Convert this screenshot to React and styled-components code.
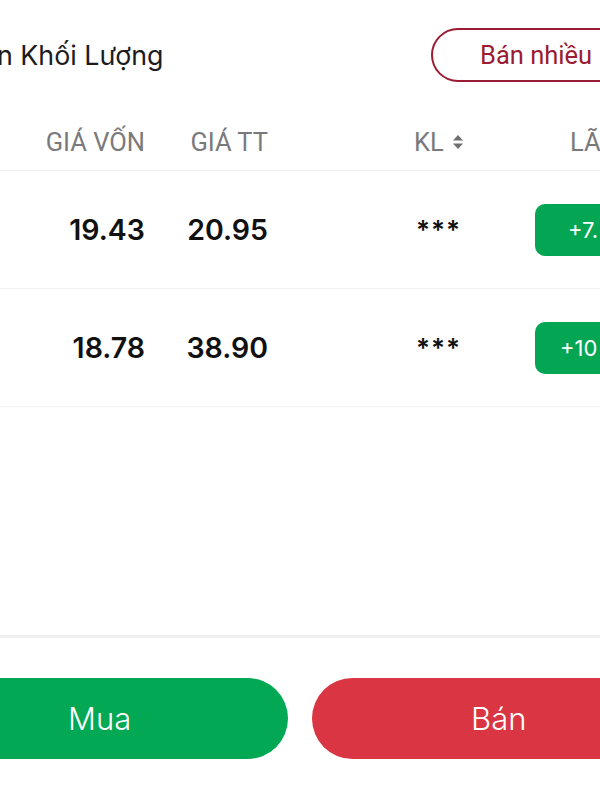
import React from "react";
import styled, { createGlobalStyle } from "styled-components";

const GlobalStyle = createGlobalStyle`
  html, body {
    margin: 0;
    padding: 0;
    background: #ffffff;
  }
  body {
    font-family: Inter, "Noto Sans", sans-serif;
  }
`;

const Screen = styled.div`
  width: 600px;
  height: 800px;
  overflow: hidden;
  background: #fff;
  display: flex;
  flex-direction: column;
`;

const TopBar = styled.div`
  display: flex;
  align-items: center;
  justify-content: space-between;
  padding-top: 28px;
  height: 54px;
`;

const Title = styled.div`
  font-size: 26.8px;
  color: #1c1c1e;
  margin-left: -3px;
  white-space: nowrap;
`;

const OutlineButton = styled.button`
  flex-shrink: 0;
  width: 210px;
  height: 54px;
  margin-right: -41px;
  border: 2px solid #9b1b32;
  border-radius: 27px;
  background: #fff;
  color: #9b1b32;
  font-family: Roboto, sans-serif;
  font-size: 25.5px;
  font-weight: 400;
  text-align: left;
  padding-left: 47px;
  white-space: nowrap;
`;

const Grid = styled.div`
  display: grid;
  grid-template-columns: 145px 123px 146px 121px 1fr;
  align-items: center;
  height: ${(p) => p.h}px;
  border-bottom: 1px solid #f1f1f1;
  margin-top: ${(p) => p.mt || 0}px;
`;

const HeadCell = styled.div`
  font-family: Roboto, sans-serif;
  font-size: 25.5px;
  color: #7a7a7c;
  white-space: nowrap;
  display: flex;
  align-items: center;
  justify-content: ${(p) => (p.align === "right" ? "flex-end" : "flex-start")};
  padding-left: ${(p) => p.pl || 0}px;
  gap: 8px;
`;

const Cell = styled.div`
  font-size: 28.5px;
  font-weight: 600;
  color: #111;
  text-align: ${(p) => p.align || "left"};
  padding-left: ${(p) => p.pl || 0}px;
  white-space: nowrap;
`;

const Stars = styled(Cell)`
  font-size: 26px;
  letter-spacing: 1px;
`;

const Pill = styled.div`
  width: 110px;
  height: 52px;
  border-radius: 10px;
  background: #04a654;
  color: #fff;
  font-size: 22px;
  display: flex;
  align-items: center;
  box-sizing: border-box;
  white-space: nowrap;
`;

const Spacer = styled.div`
  flex: 1;
`;

const Divider = styled.div`
  height: 3px;
  background: #efefef;
`;

const Actions = styled.div`
  display: flex;
  gap: 24px;
  padding: 40px 0 41px;
  margin-left: -40px;
  margin-right: -40px;
`;

const ActionButton = styled.button`
  flex: 1 1 0;
  min-width: 0;
  height: 81px;
  border: none;
  border-radius: 41px;
  background: ${(p) => p.bg};
  color: #fff;
  font-family: Inter, sans-serif;
  font-size: 31px;
  font-weight: 300;
  padding: 0;
  text-align: left;
`;

const ActionLabel = styled.span`
  display: inline-block;
  margin-left: ${(p) => p.ml}px;
`;

const SortIcon = () => (
  <svg width="12" height="18" viewBox="0 0 12 18">
    <path d="M6 2 L11 7.5 H1 Z" fill="#6e6e70" />
    <path d="M6 16 L11 10.5 H1 Z" fill="#6e6e70" />
  </svg>
);

const rows = [
  { cost: "19.43", price: "20.95", pnl: "+7.", pl: 33 },
  { cost: "18.78", price: "38.90", pnl: "+10", pl: 25 },
];

export default function App() {
  return (
    <>
      <GlobalStyle />
      <Screen>
        <TopBar>
          <Title>n Khối Lượng</Title>
          <OutlineButton>Bán nhiều</OutlineButton>
        </TopBar>
        <Grid h={57} mt={31}>
          <HeadCell align="right">GIÁ VỐN</HeadCell>
          <HeadCell align="right">GIÁ TT</HeadCell>
          <div />
          <HeadCell>
            KL <SortIcon />
          </HeadCell>
          <HeadCell pl={35}>LÃ</HeadCell>
        </Grid>
        {rows.map((r) => (
          <Grid h={117} key={r.cost}>
            <Cell align="right">{r.cost}</Cell>
            <Cell align="right">{r.price}</Cell>
            <div />
            <Stars pl={2}>***</Stars>
            <Pill style={{ paddingLeft: r.pl }}>{r.pnl}</Pill>
          </Grid>
        ))}
        <Spacer />
        <Divider />
        <Actions>
          <ActionButton bg="#02a853">
            <ActionLabel ml={108}>Mua</ActionLabel>
          </ActionButton>
          <ActionButton bg="#d93542">
            <ActionLabel ml={159}>Bán</ActionLabel>
          </ActionButton>
        </Actions>
      </Screen>
    </>
  );
}
